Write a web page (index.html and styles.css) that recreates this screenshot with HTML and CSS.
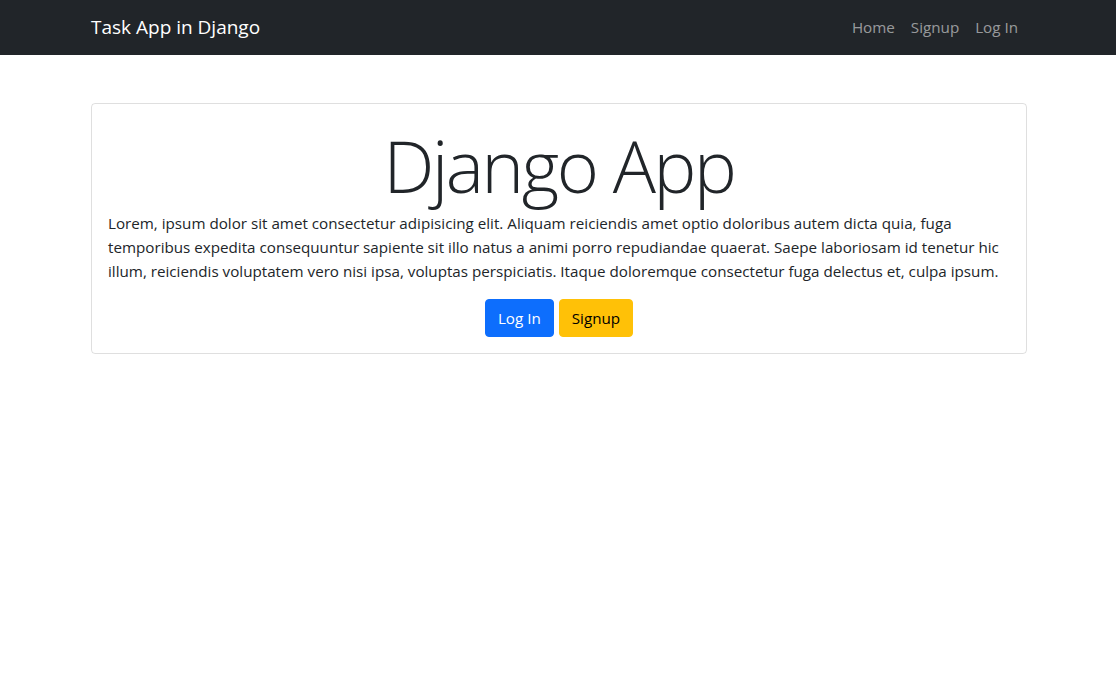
FILE: index.html
```html
<!DOCTYPE html>
<html lang="en">
<head>
<meta charset="utf-8">
<title>Task App in Django</title>
<link rel="stylesheet" href="styles.css">
</head>
<body>
<nav class="navbar">
  <div class="nav-inner">
    <a class="brand" href="#">Task App in Django</a>
    <ul class="nav-links">
      <li><a href="#">Home</a></li>
      <li><a href="#">Signup</a></li>
      <li><a href="#">Log In</a></li>
    </ul>
  </div>
</nav>
<main class="container">
  <div class="card">
    <h1 class="title">Django App</h1>
    <p class="lead-text">Lorem, ipsum dolor sit amet consectetur adipisicing elit. Aliquam reiciendis amet optio doloribus autem dicta quia, fuga temporibus expedita consequuntur sapiente sit illo natus a animi porro repudiandae quaerat. Saepe laboriosam id tenetur hic illum, reiciendis voluptatem vero nisi ipsa, voluptas perspiciatis. Itaque doloremque consectetur fuga delectus et, culpa ipsum.</p>
    <div class="actions">
      <a class="btn btn-primary" href="#">Log In</a>
      <a class="btn btn-warning" href="#">Signup</a>
    </div>
  </div>
</main>
</body>
</html>
```
FILE: styles.css
```css
* { box-sizing: border-box; }
body {
  margin: 0;
  font-family: "Open Sans", "Noto Sans", "Liberation Sans", sans-serif;
  font-size: 15.2px;
  line-height: 24px;
  color: #212529;
  background: #fff;
}
a { text-decoration: none; }
.navbar {
  background: #212529;
  height: 55px;
}
.nav-inner {
  width: 960px;
  margin: 0 auto;
  padding: 0 12px 1px 13px;
  height: 100%;
  display: flex;
  align-items: center;
  justify-content: space-between;
}
.brand {
  color: #fff;
  font-size: 19px;
}
.nav-links {
  list-style: none;
  margin: 0;
  padding: 0;
  display: flex;
}
.nav-links a {
  display: block;
  padding: 8px;
  color: rgba(255,255,255,.55);
}
.container {
  width: 960px;
  margin: 48px auto 0;
  padding: 0 11px 0 13px;
}
.card {
  border: 1px solid rgba(0,0,0,.125);
  border-radius: 4px;
  padding: 16px;
}
.title {
  margin: 0;
  text-align: center;
  font-size: 72px;
  letter-spacing: -2.4px;
  font-weight: 300;
  line-height: 91px;
}
.lead-text {
  margin: 0 0 16px;
}
.actions {
  display: flex;
  justify-content: center;
  gap: 5px;
}
.btn {
  display: inline-block;
  padding: 6px 12px;
  font-size: 15.2px;
  line-height: 24px;
  border-radius: 4px;
  border: 1px solid transparent;
}
.btn-primary { background: #0d6efd; border-color: #0d6efd; color: #fff; }
.btn-warning { background: #ffc107; border-color: #ffc107; color: #000; }
```
